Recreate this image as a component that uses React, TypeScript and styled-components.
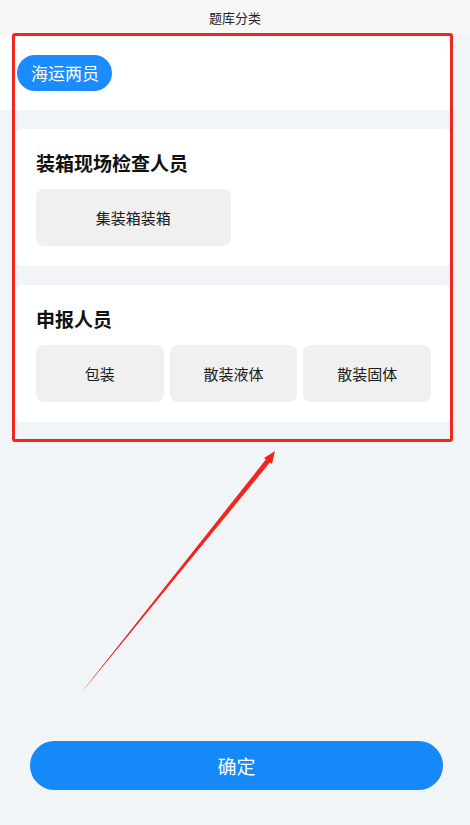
import styled, { createGlobalStyle } from 'styled-components';

const GlobalStyle = createGlobalStyle`
  html, body {
    margin: 0;
    padding: 0;
    background: #f2f5f8;
    font-family: 'Noto Sans CJK SC', 'Noto Sans', sans-serif;
  }
  * {
    box-sizing: border-box;
  }
`;

const groups = [
  { title: '装箱现场检查人员', columns: 2, items: ['集装箱装箱'] },
  { title: '申报人员', columns: 3, items: ['包装', '散装液体', '散装固体'] },
];

export default function App() {
  return (
    <>
      <GlobalStyle />
      <Page>
        <Header>题库分类</Header>
        <Content>
          <TopBar>
            <Chip>海运两员</Chip>
          </TopBar>
          {groups.map((group) => (
            <Card key={group.title}>
              <CardTitle>{group.title}</CardTitle>
              <OptionGrid $columns={group.columns}>
                {group.items.map((item) => (
                  <Option key={item}>{item}</Option>
                ))}
              </OptionGrid>
            </Card>
          ))}
        </Content>
        <Footer>
          <ConfirmButton type="button">确定</ConfirmButton>
        </Footer>

        <Highlight />
        <Arrow width="470" height="825" viewBox="0 0 470 825">
          <polygon points="81,693 269.5,462.5 264,458 275,451 272,464 266.5,460" fill="#f3261e" />
          <polygon points="81,693 271,461 267,458" fill="#f3261e" />
        </Arrow>
      </Page>
    </>
  );
}

const Page = styled.div`
  position: relative;
  display: flex;
  flex-direction: column;
  min-height: 825px;
  background: #f2f5f8;
`;

const Header = styled.div`
  height: 35px;
  display: flex;
  align-items: center;
  justify-content: center;
  background: #f7f7f7;
  font-size: 13px;
  color: #222;
`;

const Content = styled.div`
  width: 455px;
  display: flex;
  flex-direction: column;
  gap: 19px;
`;

const TopBar = styled.div`
  background: #fff;
  padding: 20px 17px 19px;
  display: flex;
`;

const Chip = styled.div`
  height: 36px;
  padding: 0 13px 0 14px;
  border-radius: 18px;
  background: #1a8cff;
  color: #fff;
  font-size: 17px;
  line-height: 36px;
`;

const Card = styled.div`
  margin: 0 4px 0 16px;
  background: #fff;
  border-radius: 6px;
  padding: 21px 20px 20px;
`;

const CardTitle = styled.div`
  font-size: 19px;
  font-weight: 700;
  line-height: 26px;
  color: #111;
  margin-bottom: 13px;
`;

const OptionGrid = styled.div<{ $columns: number }>`
  display: grid;
  grid-template-columns: repeat(${(p) => p.$columns}, 1fr);
  gap: 6px;
`;

const Option = styled.div`
  height: 57px;
  border-radius: 8px;
  background: #f0f0f0;
  display: flex;
  align-items: center;
  justify-content: center;
  font-size: 15px;
  color: #1a1a1a;
`;

const Footer = styled.div`
  margin-top: auto;
  padding: 0 27px 35px 30px;
`;

const ConfirmButton = styled.button`
  width: 100%;
  height: 49px;
  border: none;
  border-radius: 25px;
  background: #1589fa;
  color: #fff;
  font-family: inherit;
  font-size: 19px;
`;

const Highlight = styled.div`
  position: absolute;
  left: 12px;
  top: 33px;
  width: 441px;
  height: 409px;
  border: 3px solid #f0271f;
  border-radius: 3px;
  pointer-events: none;
`;

const Arrow = styled.svg`
  position: absolute;
  left: 0;
  top: 0;
  pointer-events: none;
`;
